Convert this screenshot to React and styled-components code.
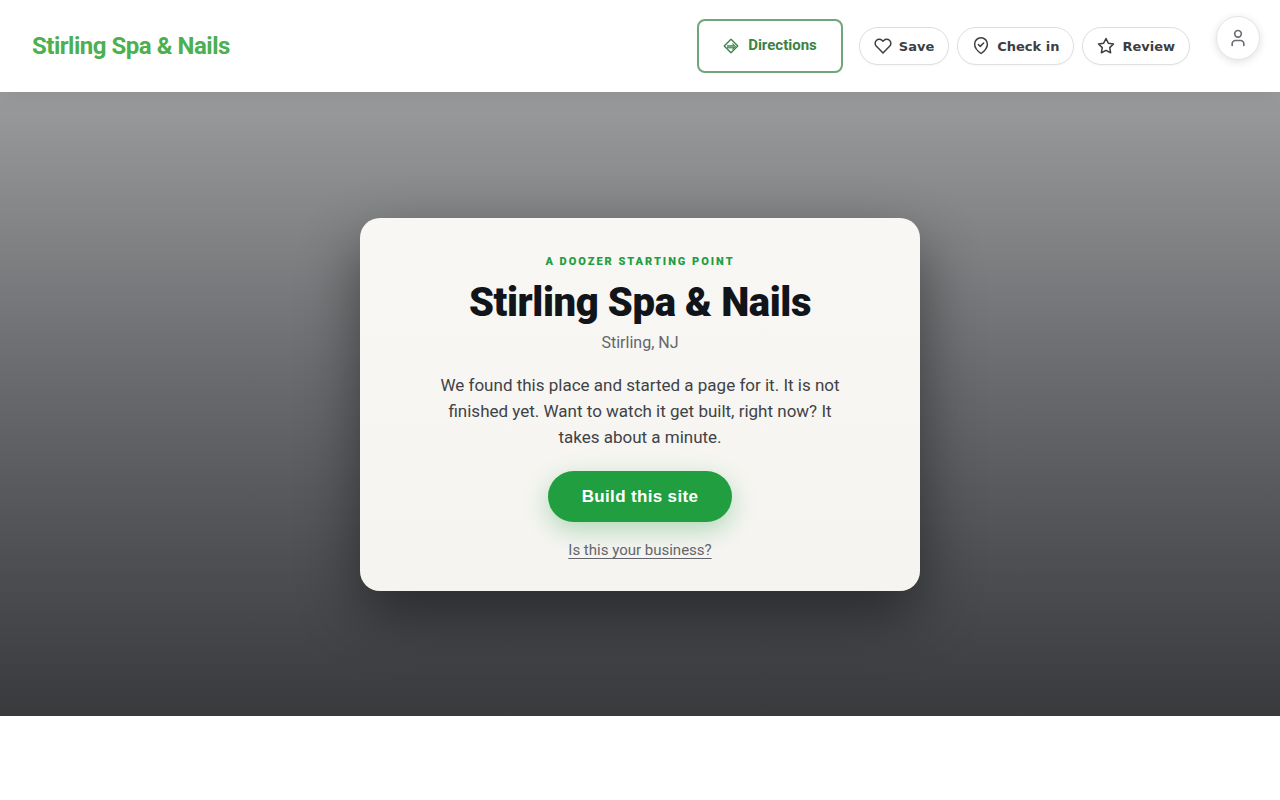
import React from 'react'
import styled, { createGlobalStyle } from 'styled-components'
import { User } from 'lucide-react'

const GlobalStyle = createGlobalStyle`
  * {
    box-sizing: border-box;
  }
  body {
    margin: 0;
    background: #fff;
    font-family: Roboto, "Liberation Sans", sans-serif;
  }
`

const Header = styled.header`
  position: relative;
  display: flex;
  align-items: center;
  justify-content: space-between;
  gap: 16px;
  padding: 19px 90px 19px 32px;
  background: #fff;
  box-shadow: 0 2px 20px rgba(0, 0, 0, 0.08);
`

const Brand = styled.a`
  font-size: 24px;
  line-height: 32px;
  font-weight: 700;
  letter-spacing: -0.02em;
  color: #4caf50;
  text-decoration: none;
`

const Actions = styled.div`
  display: flex;
  align-items: center;
  gap: 16px;
`

const DirectionsLink = styled.a`
  display: flex;
  align-items: center;
  gap: 9px;
  padding: 14px 24px 16px;
  border: 2px solid #6fa77b;
  border-radius: 8px;
  font-size: 15px;
  line-height: 20px;
  font-weight: 700;
  color: #3a8344;
  text-decoration: none;

  svg {
    margin-top: 2px;
  }
`

const PillGroup = styled.div`
  display: flex;
  gap: 8px;
`

const Pill = styled.button`
  display: flex;
  align-items: center;
  gap: 7px;
  height: 38px;
  padding: 0 14px;
  border: 1px solid #dedfe1;
  border-radius: 19px;
  background: #fff;
  font-family: "DejaVu Sans", sans-serif;
  font-size: 13px;
  font-weight: 700;
  color: #3c3e42;
  white-space: nowrap;
  cursor: pointer;
  box-shadow: 0 1px 2px rgba(0, 0, 0, 0.04);
`

const AccountButton = styled.button`
  position: fixed;
  top: 16px;
  right: 20px;
  display: flex;
  align-items: center;
  justify-content: center;
  width: 44px;
  height: 44px;
  padding: 0;
  border: 1px solid #e3e4e6;
  border-radius: 50%;
  background: #fff;
  color: #6b6d72;
  cursor: pointer;
  box-shadow: 0 2px 8px rgba(0, 0, 0, 0.12);
`

const Hero = styled.main`
  display: flex;
  align-items: center;
  justify-content: center;
  min-height: 78vh;
  padding: 48px 24px;
  background: linear-gradient(180deg, #9a9b9c 0%, #6a6b6e 45%, #4d4f53 75%, #383a3c 100%);
`

const Card = styled.section`
  display: flex;
  flex-direction: column;
  align-items: center;
  width: 100%;
  max-width: 560px;
  padding: 36px 32px 31px;
  border-radius: 20px;
  background: linear-gradient(180deg, #f8f7f3, #f5f4f1);
  text-align: center;
  box-shadow: 0 24px 60px rgba(0, 0, 0, 0.45);
`

const Eyebrow = styled.p`
  margin: 0;
  font-size: 11px;
  line-height: 15px;
  font-weight: 900;
  letter-spacing: 0.18em;
  text-transform: uppercase;
  color: #219e40;
`

const Title = styled.h1`
  margin: 10px 0 4px;
  font-size: 40px;
  line-height: 48px;
  font-weight: 900;
  letter-spacing: -0.01em;
  color: #111418;
`

const Place = styled.p`
  margin: 0;
  font-size: 16px;
  line-height: 24px;
  color: #63656a;
`

const Message = styled.p`
  max-width: 400px;
  margin: 17px 0 21px;
  font-size: 17px;
  line-height: 26px;
  color: #404246;
`

const BuildButton = styled.button`
  height: 51px;
  padding: 1px 34px 0;
  border: 0;
  border-radius: 26px;
  background: #219e40;
  font-family: "Liberation Sans", Arial, sans-serif;
  font-size: 17px;
  font-weight: 700;
  letter-spacing: 0.02em;
  color: #fff;
  cursor: pointer;
  box-shadow: 0 8px 24px rgba(33, 158, 64, 0.32);
`

const OwnerLink = styled.a`
  margin-top: 18px;
  font-size: 15px;
  line-height: 20px;
  color: #63656a;
  text-decoration: underline;
  text-decoration-skip-ink: none;
  text-underline-offset: 3px;
`

const LineIcon = styled.svg.attrs({ viewBox: '0 0 24 24', 'aria-hidden': true })`
  width: 18px;
  height: 18px;
  fill: none;
  stroke: currentColor;
  stroke-width: 2;
  stroke-linecap: round;
  stroke-linejoin: round;
`

const DirectionsIcon = () => (
  <svg width="16" height="16" viewBox="0 0 16 16" fill="none" stroke="currentColor" aria-hidden="true">
    <path d="M8 1.2 14.8 8 8 14.8 1.2 8Z" strokeWidth="1.3" strokeLinejoin="round" />
    <path d="M4 7.7H9.6V5.3L13 8.3 9.6 11.3V9.9H4Z" fill="currentColor" fillOpacity="0.6" stroke="none" />
    <path d="M4 7.7H11M4 9.9H11M9.3 5.4 12.6 8.5 9.3 11.5" strokeWidth="0.9" />
  </svg>
)

const HeartIcon = () => (
  <LineIcon>
    <path d="M20.84 4.61a5.5 5.5 0 0 0-7.78 0L12 5.67l-1.06-1.06a5.5 5.5 0 0 0-7.78 7.78l1.06 1.06L12 21.23l7.78-7.78 1.06-1.06a5.5 5.5 0 0 0 0-7.78z" />
  </LineIcon>
)

const CheckInIcon = () => (
  <LineIcon>
    <path d="M12 22s8.5-6 8.5-12.500a8.500 8.500 0 0 0-17 0C3.500 16 12 22 12 22Z" />
    <path d="m8.500 10 2.500 2.500L15.500 8" />
  </LineIcon>
)

const StarIcon = () => (
  <LineIcon>
    <path d="M12 2l3.09 6.26L22 9.27l-5 4.87 1.18 6.88L12 17.77l-6.18 3.25L7 14.14 2 9.27l6.91-1.01L12 2z" />
  </LineIcon>
)

const App = () => (
  <>
    <GlobalStyle />
    <Header>
      <Brand href="#">Stirling Spa &amp; Nails</Brand>
      <Actions>
        <DirectionsLink href="#directions">
          <DirectionsIcon />
          Directions
        </DirectionsLink>
        <PillGroup>
          <Pill type="button"><HeartIcon />Save</Pill>
          <Pill type="button"><CheckInIcon />Check in</Pill>
          <Pill type="button"><StarIcon />Review</Pill>
        </PillGroup>
      </Actions>
    </Header>
    <AccountButton type="button" aria-label="Account">
      <User size={20} />
    </AccountButton>
    <Hero>
      <Card>
        <Eyebrow>A Doozer starting point</Eyebrow>
        <Title>Stirling Spa &amp; Nails</Title>
        <Place>Stirling, NJ</Place>
        <Message>
          We found this place and started a page for it. It is not finished yet. Want to watch it get built, right now? It takes about a minute.
        </Message>
        <BuildButton type="button">Build this site</BuildButton>
        <OwnerLink href="#claim">Is this your business?</OwnerLink>
      </Card>
    </Hero>
  </>
)

export default App
